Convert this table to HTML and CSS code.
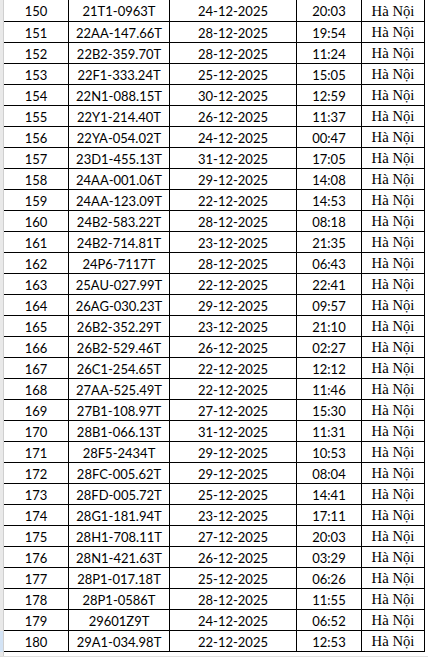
FILE: index.html
```html
<!DOCTYPE html>
<html lang="vi">
<head>
<meta charset="utf-8">
<title>Danh sách</title>
<link rel="stylesheet" href="styles.css">
</head>
<body>
<div class="sheet">
  <div class="row"><div class="hdr"></div><div class="c n">150</div><div class="c p">21T1-0963T</div><div class="c d">24-12-2025</div><div class="c t">20:03</div><div class="c h">Hà Nội</div></div>
  <div class="row"><div class="hdr"></div><div class="c n">151</div><div class="c p">22AA-147.66T</div><div class="c d">28-12-2025</div><div class="c t">19:54</div><div class="c h">Hà Nội</div></div>
  <div class="row"><div class="hdr"></div><div class="c n">152</div><div class="c p">22B2-359.70T</div><div class="c d">28-12-2025</div><div class="c t">11:24</div><div class="c h">Hà Nội</div></div>
  <div class="row"><div class="hdr"></div><div class="c n">153</div><div class="c p">22F1-333.24T</div><div class="c d">25-12-2025</div><div class="c t">15:05</div><div class="c h">Hà Nội</div></div>
  <div class="row"><div class="hdr"></div><div class="c n">154</div><div class="c p">22N1-088.15T</div><div class="c d">30-12-2025</div><div class="c t">12:59</div><div class="c h">Hà Nội</div></div>
  <div class="row"><div class="hdr"></div><div class="c n">155</div><div class="c p">22Y1-214.40T</div><div class="c d">26-12-2025</div><div class="c t">11:37</div><div class="c h">Hà Nội</div></div>
  <div class="row"><div class="hdr"></div><div class="c n">156</div><div class="c p">22YA-054.02T</div><div class="c d">24-12-2025</div><div class="c t">00:47</div><div class="c h">Hà Nội</div></div>
  <div class="row"><div class="hdr"></div><div class="c n">157</div><div class="c p">23D1-455.13T</div><div class="c d">31-12-2025</div><div class="c t">17:05</div><div class="c h">Hà Nội</div></div>
  <div class="row"><div class="hdr"></div><div class="c n">158</div><div class="c p">24AA-001.06T</div><div class="c d">29-12-2025</div><div class="c t">14:08</div><div class="c h">Hà Nội</div></div>
  <div class="row"><div class="hdr"></div><div class="c n">159</div><div class="c p">24AA-123.09T</div><div class="c d">22-12-2025</div><div class="c t">14:53</div><div class="c h">Hà Nội</div></div>
  <div class="row"><div class="hdr"></div><div class="c n">160</div><div class="c p">24B2-583.22T</div><div class="c d">28-12-2025</div><div class="c t">08:18</div><div class="c h">Hà Nội</div></div>
  <div class="row"><div class="hdr"></div><div class="c n">161</div><div class="c p">24B2-714.81T</div><div class="c d">23-12-2025</div><div class="c t">21:35</div><div class="c h">Hà Nội</div></div>
  <div class="row"><div class="hdr"></div><div class="c n">162</div><div class="c p">24P6-7117T</div><div class="c d">28-12-2025</div><div class="c t">06:43</div><div class="c h">Hà Nội</div></div>
  <div class="row"><div class="hdr"></div><div class="c n">163</div><div class="c p">25AU-027.99T</div><div class="c d">22-12-2025</div><div class="c t">22:41</div><div class="c h">Hà Nội</div></div>
  <div class="row"><div class="hdr"></div><div class="c n">164</div><div class="c p">26AG-030.23T</div><div class="c d">29-12-2025</div><div class="c t">09:57</div><div class="c h">Hà Nội</div></div>
  <div class="row"><div class="hdr"></div><div class="c n">165</div><div class="c p">26B2-352.29T</div><div class="c d">23-12-2025</div><div class="c t">21:10</div><div class="c h">Hà Nội</div></div>
  <div class="row"><div class="hdr"></div><div class="c n">166</div><div class="c p">26B2-529.46T</div><div class="c d">26-12-2025</div><div class="c t">02:27</div><div class="c h">Hà Nội</div></div>
  <div class="row"><div class="hdr"></div><div class="c n">167</div><div class="c p">26C1-254.65T</div><div class="c d">22-12-2025</div><div class="c t">12:12</div><div class="c h">Hà Nội</div></div>
  <div class="row"><div class="hdr"></div><div class="c n">168</div><div class="c p">27AA-525.49T</div><div class="c d">22-12-2025</div><div class="c t">11:46</div><div class="c h">Hà Nội</div></div>
  <div class="row"><div class="hdr"></div><div class="c n">169</div><div class="c p">27B1-108.97T</div><div class="c d">27-12-2025</div><div class="c t">15:30</div><div class="c h">Hà Nội</div></div>
  <div class="row"><div class="hdr"></div><div class="c n">170</div><div class="c p">28B1-066.13T</div><div class="c d">31-12-2025</div><div class="c t">11:31</div><div class="c h">Hà Nội</div></div>
  <div class="row"><div class="hdr"></div><div class="c n">171</div><div class="c p">28F5-2434T</div><div class="c d">29-12-2025</div><div class="c t">10:53</div><div class="c h">Hà Nội</div></div>
  <div class="row"><div class="hdr"></div><div class="c n">172</div><div class="c p">28FC-005.62T</div><div class="c d">29-12-2025</div><div class="c t">08:04</div><div class="c h">Hà Nội</div></div>
  <div class="row"><div class="hdr"></div><div class="c n">173</div><div class="c p">28FD-005.72T</div><div class="c d">25-12-2025</div><div class="c t">14:41</div><div class="c h">Hà Nội</div></div>
  <div class="row"><div class="hdr"></div><div class="c n">174</div><div class="c p">28G1-181.94T</div><div class="c d">23-12-2025</div><div class="c t">17:11</div><div class="c h">Hà Nội</div></div>
  <div class="row"><div class="hdr"></div><div class="c n">175</div><div class="c p">28H1-708.11T</div><div class="c d">27-12-2025</div><div class="c t">20:03</div><div class="c h">Hà Nội</div></div>
  <div class="row"><div class="hdr"></div><div class="c n">176</div><div class="c p">28N1-421.63T</div><div class="c d">26-12-2025</div><div class="c t">03:29</div><div class="c h">Hà Nội</div></div>
  <div class="row"><div class="hdr"></div><div class="c n">177</div><div class="c p">28P1-017.18T</div><div class="c d">25-12-2025</div><div class="c t">06:26</div><div class="c h">Hà Nội</div></div>
  <div class="row"><div class="hdr"></div><div class="c n">178</div><div class="c p">28P1-0586T</div><div class="c d">28-12-2025</div><div class="c t">11:55</div><div class="c h">Hà Nội</div></div>
  <div class="row"><div class="hdr"></div><div class="c n">179</div><div class="c p">29601Z9T</div><div class="c d">24-12-2025</div><div class="c t">06:52</div><div class="c h">Hà Nội</div></div>
  <div class="row sel"><div class="hdr"></div><div class="c n">180</div><div class="c p">29A1-034.98T</div><div class="c d">22-12-2025</div><div class="c t">12:53</div><div class="c h">Hà Nội</div></div>
  <div class="row foot"><div class="hdr"></div></div>
</div>
</body>
</html>
```

FILE: styles.css
```css
html, body {
  margin: 0;
  padding: 0;
  background: #ffffff;
}

.sheet {
  display: flex;
  flex-direction: column;
  width: 428px;
}

.row {
  display: grid;
  grid-template-columns: 4px 65px 101px 127px 65px 63px 3px;
  height: 21px;
  font-family: Lato, "Liberation Sans", sans-serif;
  font-size: 13px;
  color: #000;
}

.row:first-child {
  height: 22px;
}

.hdr {
  background: #e9e9e9;
  border-right: 1px solid #cfcfcf;
  box-sizing: border-box;
}

.sel .hdr {
  background: #d3e3f5;
}

.c {
  display: flex;
  align-items: center;
  justify-content: center;
  border-right: 1px solid #000;
  border-bottom: 1px solid #000;
  box-sizing: border-box;
  white-space: nowrap;
  padding-top: 1px;
}

.h {
  font-family: "Liberation Serif", "Times New Roman", serif;
  font-size: 14.7px;
}

.foot {
  height: 5px;
  border-bottom: 1px solid #e0e0e0;
  box-sizing: border-box;
}
```
